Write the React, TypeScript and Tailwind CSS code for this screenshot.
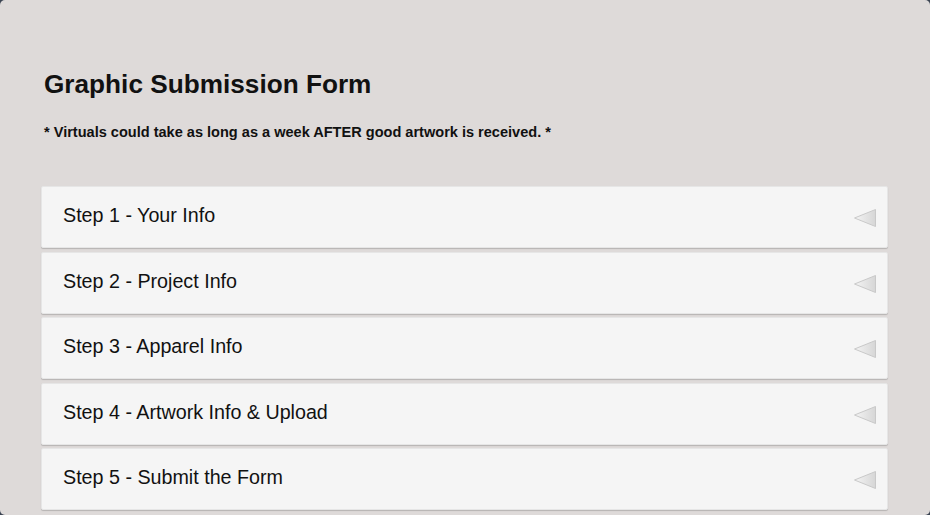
const steps = [
  'Step 1 - Your Info',
  'Step 2 - Project Info',
  'Step 3 - Apparel Info',
  'Step 4 - Artwork Info & Upload',
  'Step 5 - Submit the Form',
]

function Arrow() {
  return (
    <svg width="24" height="20" viewBox="0 0 24 20" className="shrink-0 mt-[2px]">
      <defs>
        <linearGradient id="arrowFill" x1="0" y1="0" x2="1" y2="0">
          <stop offset="0" stopColor="#f4f4f4" />
          <stop offset="1" stopColor="#d6d6d6" />
        </linearGradient>
      </defs>
      <path d="M1.5 10 L22.5 1.5 L22.5 18.5 Z" fill="url(#arrowFill)" stroke="#c9c9c9" strokeWidth="1" strokeLinejoin="round" />
    </svg>
  )
}

export default function App() {
  return (
    <div className="h-[515px] bg-[#3b4452]" style={{ fontFamily: '"Liberation Sans", Arial, sans-serif' }}>
      <div className="h-full rounded-[5px] bg-[#dedad9] pl-[41px] pr-[42px] overflow-hidden">
        <h1 className="pt-[69px] pl-[3px] text-[26.2px] leading-[30px] font-bold text-[#111]">Graphic Submission Form</h1>
        <p className="mt-[25px] pl-[3px] text-[14.55px] leading-[16px] font-bold text-[#111]">
          * Virtuals could take as long as a week AFTER good artwork is received. *
        </p>
        <div className="mt-[46px] flex flex-col gap-[3.5px]">
          {steps.map((s) => (
            <div
              key={s}
              className="h-[62px] flex items-center justify-between bg-[#f5f5f5] border border-[#e6e6e6] rounded-[2px] shadow-[0_1px_1px_rgba(0,0,0,0.18)] pl-[21px] pr-[10px]"
            >
              <span className="text-[19.7px] text-[#111] pb-[2px]">{s}</span>
              <Arrow />
            </div>
          ))}
        </div>
      </div>
    </div>
  )
}
